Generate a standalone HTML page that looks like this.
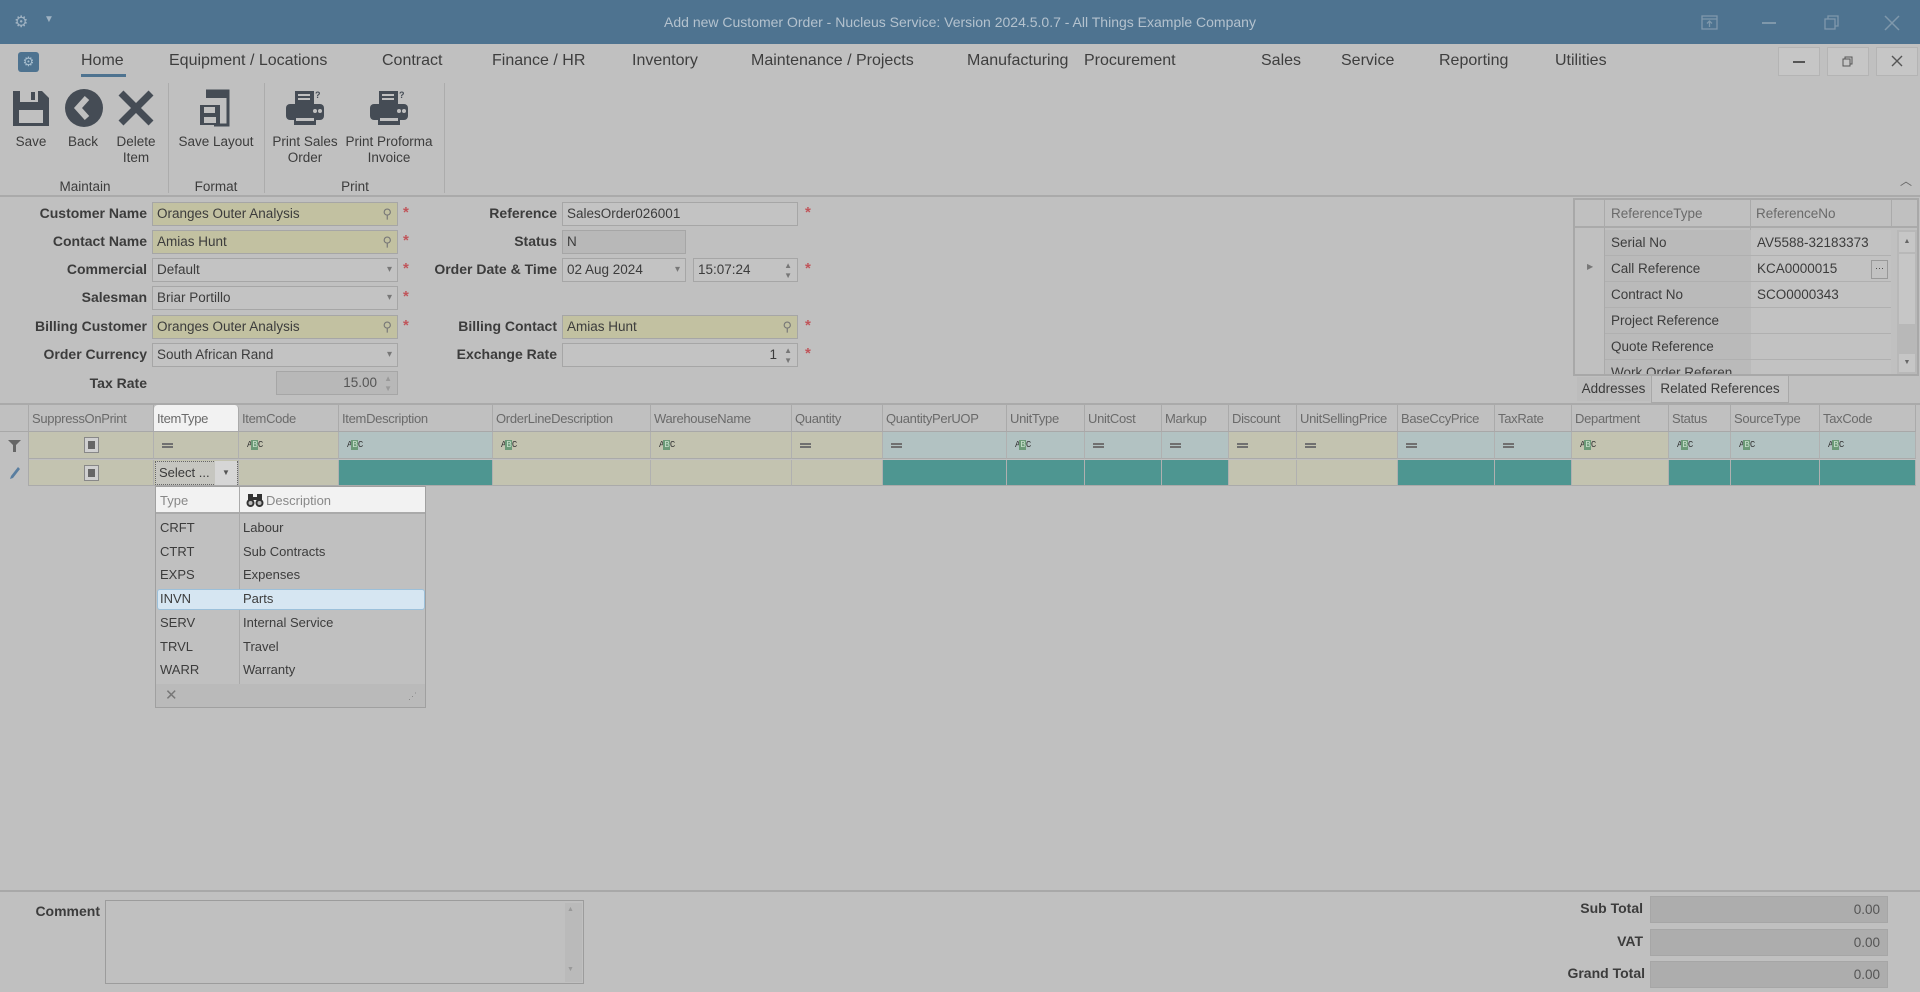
<!DOCTYPE html>
<html><head><meta charset="utf-8"><style>
*{box-sizing:border-box;margin:0;padding:0}
body{width:1920px;height:992px;background:#c0c0c0;font-family:"Liberation Sans",sans-serif;color:#3a3a3a;position:relative;overflow:hidden;font-size:14px}
.a{position:absolute}
.title{left:0;top:0;width:1920px;height:44px;background:#4e7390;color:#b4c2ce;font-size:14px;text-align:center;line-height:44px}
.menu{top:52px;font-size:16px;color:#3e3e3e}
.lbl{font-weight:bold;font-size:14px;text-align:right;color:#3c3c3c}
.f{height:24px;border:1px solid #a6a6a6;background:#c3c3c3;font-size:13.5px;line-height:22px;padding-left:4px;color:#3c3c3c}
.y{background:#c2c1a1}
.dis{background:#b8b8b8}
.ast{color:#c0555a;font-size:15px;font-weight:bold}
.ic{position:absolute;right:5px;top:0;font-size:10px;color:#777}
.rl{font-size:13.5px;text-align:center;color:#3c3c3c;line-height:16px}
.gh{top:405px;height:27px;font-size:13px;color:#6a6a6a;line-height:27px;padding-left:3px;border-right:1px solid #aaa;white-space:nowrap;overflow:hidden;letter-spacing:-0.3px}
.fr{top:432px;height:27px;border-right:1px solid #b0b0b0;border-bottom:1px solid #aaa;padding-left:8px;color:#555}
.er{top:460px;height:26px;border-right:1px solid #b0b0b0;border-bottom:1px solid #aaa}
.t{background:#c3c3b0}.b{background:#b2c2c2}.tl{background:#4e9691}
.eq{position:absolute;left:8px;top:11px;width:11px;height:5px;border-top:2px solid #707070;border-bottom:2px solid #707070}
.abc{position:absolute;left:8px;top:8px;font-size:9px;font-family:"Liberation Mono",monospace;color:#333;line-height:11px;letter-spacing:-1px}
.abc b{background:#6c9a78;color:#c8e0cc;padding:0 1px;font-weight:normal}
.dd{font-size:13px;color:#3c3c3c}
.rr{height:26px;border-bottom:1px solid #b0b0b0;font-size:13.5px;line-height:26px;padding-left:6px;color:#3c3c3c}
</style></head><body>
<div class="a title">Add new Customer Order - Nucleus Service: Version 2024.5.0.7 - All Things Example Company</div>
<div class="a" style="left:14px;top:12px;color:#9fb2c2;font-size:16px">⚙</div>
<div class="a" style="left:44px;top:14px;color:#9fb2c2;font-size:10px">▼</div>
<svg class="a" style="left:1700px;top:14px" width="20" height="18"><rect x="2" y="2" width="15" height="13" fill="none" stroke="#7f98ab" stroke-width="1.3"/><path d="M2 5h15M9.5 13V7M7 9.5l2.5-2.5 2.5 2.5" stroke="#7f98ab" fill="none" stroke-width="1.3"/></svg>
<div class="a" style="left:1762px;top:22px;width:14px;height:1.5px;background:#7f98ab"></div>
<svg class="a" style="left:1823px;top:14px" width="18" height="18"><rect x="2" y="5" width="10" height="10" fill="none" stroke="#7f98ab" stroke-width="1.3"/><path d="M5 5V2h10v10h-3" fill="none" stroke="#7f98ab" stroke-width="1.3"/></svg>
<svg class="a" style="left:1882px;top:13px" width="20" height="20"><path d="M3 3l14 14M17 3L3 17" stroke="#7f98ab" stroke-width="1.5"/></svg>

<div class="a" style="left:18px;top:52px;width:21px;height:20px;background:#4e7390;border-radius:3px;color:#a9c0d0;font-size:13px;text-align:center;line-height:20px">⚙</div>
<div class="a menu" style="left:81px">Home</div>
<div class="a" style="left:81px;top:74px;width:45px;height:3px;background:#4e7390"></div>
<div class="a menu" style="left:169px">Equipment / Locations</div>
<div class="a menu" style="left:382px">Contract</div>
<div class="a menu" style="left:492px">Finance / HR</div>
<div class="a menu" style="left:632px">Inventory</div>
<div class="a menu" style="left:751px">Maintenance / Projects</div>
<div class="a menu" style="left:967px">Manufacturing</div>
<div class="a menu" style="left:1084px">Procurement</div>
<div class="a menu" style="left:1261px">Sales</div>
<div class="a menu" style="left:1341px">Service</div>
<div class="a menu" style="left:1439px">Reporting</div>
<div class="a menu" style="left:1555px">Utilities</div>
<div class="a" style="left:1778px;top:47px;width:42px;height:29px;background:#c6c6c6;border:1px solid #b4b4b4"><div class="a" style="left:14px;top:13px;width:12px;height:1.5px;background:#555"></div></div>
<svg class="a" style="left:1827px;top:47px" width="42" height="29"><rect x="0.5" y="0.5" width="41" height="28" fill="#c6c6c6" stroke="#b4b4b4"/><rect x="16" y="12" width="7" height="7" fill="none" stroke="#555"/><path d="M18 12V10h7v7h-2" fill="none" stroke="#555"/></svg>
<svg class="a" style="left:1876px;top:47px" width="42" height="29"><rect x="0.5" y="0.5" width="41" height="28" fill="#c6c6c6" stroke="#b4b4b4"/><path d="M16 9l10 10M26 9L16 19" stroke="#555" stroke-width="1.4"/></svg>

<!-- ribbon icons -->
<svg class="a" style="left:11px;top:88px" width="40" height="40"><path d="M2 3h29l7 7v28H2z" fill="#454c55"/><rect x="9" y="3" width="18" height="11" fill="#c0c0c0"/><rect x="20" y="4" width="4" height="8" fill="#454c55"/><rect x="8" y="22" width="24" height="13" fill="#c0c0c0"/></svg>
<svg class="a" style="left:64px;top:88px" width="40" height="40"><circle cx="20" cy="20" r="19" fill="#454c55"/><path d="M23 10L14 20l9 10" stroke="#c0c0c0" stroke-width="6" fill="none"/></svg>
<svg class="a" style="left:116px;top:88px" width="40" height="40"><path d="M5 5l30 30M35 5L5 35" stroke="#454c55" stroke-width="7"/></svg>
<svg class="a" style="left:198px;top:88px" width="38" height="40"><path d="M8 3h22v34H16" fill="none" stroke="#454c55" stroke-width="3"/><path d="M8 3h22v7H8z" fill="#454c55"/><rect x="2" y="17" width="20" height="20" fill="#454c55"/><rect x="6" y="19" width="11" height="6" fill="#c0c0c0"/><rect x="6" y="29" width="12" height="6" fill="#c0c0c0"/></svg>
<svg class="a" style="left:284px;top:88px" width="42" height="40"><rect x="11" y="3" width="19" height="14" fill="#454c55"/><path d="M14 7h12M14 11h12" stroke="#c0c0c0" stroke-width="2"/><rect x="2" y="16" width="38" height="16" rx="4" fill="#454c55"/><rect x="10" y="29" width="22" height="8" fill="#454c55"/><rect x="12" y="30" width="18" height="3" fill="#c0c0c0"/><circle cx="31" cy="23" r="2" fill="#c0c0c0"/><circle cx="36" cy="23" r="2" fill="#c0c0c0"/><text x="31" y="10" font-size="9" fill="#454c55" font-family="Liberation Sans" font-weight="bold">?</text></svg>
<svg class="a" style="left:368px;top:88px" width="42" height="40"><rect x="11" y="3" width="19" height="14" fill="#454c55"/><path d="M14 7h12M14 11h12" stroke="#c0c0c0" stroke-width="2"/><rect x="2" y="16" width="38" height="16" rx="4" fill="#454c55"/><rect x="10" y="29" width="22" height="8" fill="#454c55"/><rect x="12" y="30" width="18" height="3" fill="#c0c0c0"/><circle cx="31" cy="23" r="2" fill="#c0c0c0"/><circle cx="36" cy="23" r="2" fill="#c0c0c0"/><text x="31" y="10" font-size="9" fill="#454c55" font-family="Liberation Sans" font-weight="bold">?</text></svg>
<div class="a rl" style="left:11px;top:134px;width:40px">Save</div>
<div class="a rl" style="left:63px;top:134px;width:40px">Back</div>
<div class="a rl" style="left:110px;top:134px;width:52px">Delete<br>Item</div>
<div class="a rl" style="left:172px;top:134px;width:88px">Save Layout</div>
<div class="a rl" style="left:268px;top:134px;width:74px">Print Sales<br>Order</div>
<div class="a rl" style="left:344px;top:134px;width:90px">Print Proforma<br>Invoice</div>
<div class="a rl" style="left:40px;top:179px;width:90px">Maintain</div>
<div class="a rl" style="left:172px;top:179px;width:88px">Format</div>
<div class="a rl" style="left:300px;top:179px;width:110px">Print</div>
<div class="a" style="left:168px;top:83px;width:1px;height:110px;background:#acacac"></div>
<div class="a" style="left:264px;top:83px;width:1px;height:110px;background:#acacac"></div>
<div class="a" style="left:444px;top:83px;width:1px;height:110px;background:#acacac"></div>
<div class="a" style="left:1900px;top:172px;font-size:12px;color:#666">︿</div>
<div class="a" style="left:0;top:195px;width:1920px;height:2px;background:#aaa"></div>

<!-- form -->
<div class="a lbl" style="left:0;top:205px;width:147px">Customer Name</div>
<div class="a f y" style="left:152px;top:202px;width:246px">Oranges Outer Analysis<span class="ic" style="font-size:13px">⚲</span></div>
<div class="a ast" style="left:403px;top:204px">*</div>
<div class="a lbl" style="left:0;top:233px;width:147px">Contact Name</div>
<div class="a f y" style="left:152px;top:230px;width:246px">Amias Hunt<span class="ic" style="font-size:13px">⚲</span></div>
<div class="a ast" style="left:403px;top:232px">*</div>
<div class="a lbl" style="left:0;top:261px;width:147px">Commercial</div>
<div class="a f" style="left:152px;top:258px;width:246px">Default<span class="ic">▾</span></div>
<div class="a ast" style="left:403px;top:260px">*</div>
<div class="a lbl" style="left:0;top:289px;width:147px">Salesman</div>
<div class="a f" style="left:152px;top:286px;width:246px">Briar Portillo<span class="ic">▾</span></div>
<div class="a ast" style="left:403px;top:288px">*</div>
<div class="a lbl" style="left:0;top:318px;width:147px">Billing Customer</div>
<div class="a f y" style="left:152px;top:315px;width:246px">Oranges Outer Analysis<span class="ic" style="font-size:13px">⚲</span></div>
<div class="a ast" style="left:403px;top:317px">*</div>
<div class="a lbl" style="left:0;top:346px;width:147px">Order Currency</div>
<div class="a f" style="left:152px;top:343px;width:246px">South African Rand<span class="ic">▾</span></div>
<div class="a lbl" style="left:0;top:375px;width:147px">Tax Rate</div>
<div class="a f dis" style="left:276px;top:371px;width:122px;text-align:right;padding-right:20px;color:#555">15.00<span class="ic" style="font-size:8px;color:#999;line-height:10px;top:2px">▲<br>▼</span></div>

<div class="a lbl" style="left:400px;top:205px;width:157px">Reference</div>
<div class="a f" style="left:562px;top:202px;width:236px">SalesOrder026001</div>
<div class="a ast" style="left:805px;top:204px">*</div>
<div class="a lbl" style="left:400px;top:233px;width:157px">Status</div>
<div class="a f dis" style="left:562px;top:230px;width:124px">N</div>
<div class="a lbl" style="left:400px;top:261px;width:157px">Order Date &amp; Time</div>
<div class="a f" style="left:562px;top:258px;width:124px">02 Aug 2024<span class="ic">▾</span></div>
<div class="a f" style="left:693px;top:258px;width:105px">15:07:24<span class="ic" style="font-size:8px;line-height:10px;top:2px">▲<br>▼</span></div>
<div class="a ast" style="left:805px;top:260px">*</div>
<div class="a lbl" style="left:400px;top:318px;width:157px">Billing Contact</div>
<div class="a f y" style="left:562px;top:315px;width:236px">Amias Hunt<span class="ic" style="font-size:13px">⚲</span></div>
<div class="a ast" style="left:805px;top:317px">*</div>
<div class="a lbl" style="left:400px;top:346px;width:157px">Exchange Rate</div>
<div class="a f" style="left:562px;top:343px;width:236px;text-align:right;padding-right:20px">1<span class="ic" style="font-size:8px;line-height:10px;top:2px">▲<br>▼</span></div>
<div class="a ast" style="left:805px;top:345px">*</div>

<!-- references panel -->
<div class="a" style="left:1573px;top:198px;width:346px;height:178px;border:2px solid #a8a8a8;background:#c0c0c0;overflow:hidden">
 <div class="a" style="left:0;top:0;width:342px;height:28px;border-bottom:2px solid #aaa"></div>
 <div class="a" style="left:29px;top:0;width:1px;height:176px;background:#aaa"></div>
 <div class="a" style="left:36px;top:6px;font-size:13.5px;color:#6a6a6a">ReferenceType</div>
 <div class="a" style="left:175px;top:0;width:1px;height:176px;background:#aaa"></div>
 <div class="a" style="left:181px;top:6px;font-size:13.5px;color:#6a6a6a">ReferenceNo</div>
 <div class="a" style="left:316px;top:0;width:1px;height:28px;background:#aaa"></div>
 <div class="a" style="left:30px;top:30px;width:286px">
  <div class="rr" style="background:#bababa">Serial No</div>
  <div class="rr" style="background:#bababa">Call Reference</div>
  <div class="rr" style="background:#bababa">Contract No</div>
  <div class="rr" style="background:#bababa">Project Reference</div>
  <div class="rr" style="background:#bababa">Quote Reference</div>
  <div class="rr" style="background:#bababa">Work Order Referen</div>
 </div>
 <div class="a" style="left:176px;top:30px;width:140px">
  <div class="rr" style="background:#c2c2c2">AV5588-32183373</div>
  <div class="rr" style="background:#c2c2c2">KCA0000015</div>
  <div class="rr" style="background:#c2c2c2">SCO0000343</div>
  <div class="rr" style="background:#c2c2c2"></div>
  <div class="rr" style="background:#c2c2c2"></div>
  <div class="rr" style="background:#c2c2c2"></div>
 </div>
 <div class="a" style="left:296px;top:60px;width:17px;height:19px;border:1px solid #999;font-size:9px;text-align:center;line-height:14px">···</div>
 <div class="a" style="left:12px;top:62px;font-size:8px;color:#777">▶</div>
 <div class="a" style="left:322px;top:30px;width:20px;height:146px;background:#b8b8b8"></div>
 <div class="a" style="left:324px;top:32px;width:16px;height:20px;background:#c6c6c6;font-size:7px;text-align:center;line-height:20px;color:#666">▲</div>
 <div class="a" style="left:324px;top:54px;width:16px;height:70px;background:#c6c6c6"></div>
 <div class="a" style="left:324px;top:154px;width:16px;height:18px;background:#c6c6c6;font-size:7px;text-align:center;line-height:18px;color:#666">▼</div>
</div>
<div class="a" style="left:1577px;top:377px;width:73px;height:24px;background:#bcbcbc;font-size:13.5px;line-height:24px;text-align:center">Addresses</div>
<div class="a" style="left:1651px;top:376px;width:138px;height:27px;background:#c4c4c4;border:1px solid #a8a8a8;border-top:none;font-size:13.5px;line-height:26px;text-align:center">Related References</div>

<!-- grid -->
<div class="a" style="left:0;top:403px;width:1920px;height:2px;background:#aaa"></div>
<div class="a gh" style="left:0;width:29px"></div>
<div class="a gh" style="left:29px;width:125px">SuppressOnPrint</div>
<div class="a gh" style="left:154px;width:85px;background:#f2f2f2;border-radius:4px 4px 0 0">ItemType</div>
<div class="a gh" style="left:239px;width:100px">ItemCode</div>
<div class="a gh" style="left:339px;width:154px">ItemDescription</div>
<div class="a gh" style="left:493px;width:158px">OrderLineDescription</div>
<div class="a gh" style="left:651px;width:141px">WarehouseName</div>
<div class="a gh" style="left:792px;width:91px">Quantity</div>
<div class="a gh" style="left:883px;width:124px">QuantityPerUOP</div>
<div class="a gh" style="left:1007px;width:78px">UnitType</div>
<div class="a gh" style="left:1085px;width:77px">UnitCost</div>
<div class="a gh" style="left:1162px;width:67px">Markup</div>
<div class="a gh" style="left:1229px;width:68px">Discount</div>
<div class="a gh" style="left:1297px;width:101px">UnitSellingPrice</div>
<div class="a gh" style="left:1398px;width:97px">BaseCcyPrice</div>
<div class="a gh" style="left:1495px;width:77px">TaxRate</div>
<div class="a gh" style="left:1572px;width:97px">Department</div>
<div class="a gh" style="left:1669px;width:62px">Status</div>
<div class="a gh" style="left:1731px;width:89px">SourceType</div>
<div class="a gh" style="left:1820px;width:96px">TaxCode</div>
<div class="a" style="left:0;top:431px;width:1916px;height:1px;background:#a8a8a8"></div>

<div class="a" style="left:0;top:432px;width:29px;height:54px;background:#c0c0c0;border-right:1px solid #aaa"></div>
<svg class="a" style="left:8px;top:440px" width="13" height="12"><path d="M0 0h13L8 5v7H5V5z" fill="#666"/></svg>
<svg class="a" style="left:9px;top:466px" width="12" height="13"><path d="M9 1l2 2-7 9-3 1 1-3z" fill="#5a7ea0"/></svg>
<!-- filter row -->
<div class="a fr t" style="left:29px;width:125px"></div>
<div class="a fr t" style="left:154px;width:85px"><i class="eq"></i></div>
<div class="a fr t" style="left:239px;width:100px"><span class="abc">A<b>B</b>C</span></div>
<div class="a fr b" style="left:339px;width:154px"><span class="abc">A<b>B</b>C</span></div>
<div class="a fr t" style="left:493px;width:158px"><span class="abc">A<b>B</b>C</span></div>
<div class="a fr t" style="left:651px;width:141px"><span class="abc">A<b>B</b>C</span></div>
<div class="a fr t" style="left:792px;width:91px"><i class="eq"></i></div>
<div class="a fr b" style="left:883px;width:124px"><i class="eq"></i></div>
<div class="a fr b" style="left:1007px;width:78px"><span class="abc">A<b>B</b>C</span></div>
<div class="a fr b" style="left:1085px;width:77px"><i class="eq"></i></div>
<div class="a fr b" style="left:1162px;width:67px"><i class="eq"></i></div>
<div class="a fr t" style="left:1229px;width:68px"><i class="eq"></i></div>
<div class="a fr t" style="left:1297px;width:101px"><i class="eq"></i></div>
<div class="a fr b" style="left:1398px;width:97px"><i class="eq"></i></div>
<div class="a fr b" style="left:1495px;width:77px"><i class="eq"></i></div>
<div class="a fr t" style="left:1572px;width:97px"><span class="abc">A<b>B</b>C</span></div>
<div class="a fr b" style="left:1669px;width:62px"><span class="abc">A<b>B</b>C</span></div>
<div class="a fr b" style="left:1731px;width:89px"><span class="abc">A<b>B</b>C</span></div>
<div class="a fr b" style="left:1820px;width:96px"><span class="abc">A<b>B</b>C</span></div>
<!-- edit row -->
<div class="a er t" style="left:29px;width:125px"></div>
<div class="a er t" style="left:154px;width:85px"></div>
<div class="a er t" style="left:239px;width:100px"></div>
<div class="a er tl" style="left:339px;width:154px"></div>
<div class="a er t" style="left:493px;width:158px"></div>
<div class="a er t" style="left:651px;width:141px"></div>
<div class="a er t" style="left:792px;width:91px"></div>
<div class="a er tl" style="left:883px;width:124px"></div>
<div class="a er tl" style="left:1007px;width:78px"></div>
<div class="a er tl" style="left:1085px;width:77px"></div>
<div class="a er tl" style="left:1162px;width:67px"></div>
<div class="a er t" style="left:1229px;width:68px"></div>
<div class="a er t" style="left:1297px;width:101px"></div>
<div class="a er tl" style="left:1398px;width:97px"></div>
<div class="a er tl" style="left:1495px;width:77px"></div>
<div class="a er t" style="left:1572px;width:97px"></div>
<div class="a er tl" style="left:1669px;width:62px"></div>
<div class="a er tl" style="left:1731px;width:89px"></div>
<div class="a er tl" style="left:1820px;width:96px"></div>
<div class="a" style="left:84px;top:437px;width:15px;height:16px;border:1px solid #888;background:#d0d0d0"><div class="a" style="left:3px;top:3px;width:7px;height:8px;background:#666"></div></div>
<div class="a" style="left:84px;top:465px;width:15px;height:16px;border:1px solid #888;background:#d0d0d0"><div class="a" style="left:3px;top:3px;width:7px;height:8px;background:#666"></div></div>
<div class="a" style="left:155px;top:461px;width:83px;height:24px;border:1px dotted #666;background:#c6c6c0;font-size:13px;line-height:22px;padding-left:3px">Select ...</div>
<div class="a" style="left:215px;top:461px;width:22px;height:24px;background:#d6d6d6;font-size:8px;text-align:center;line-height:24px;color:#555">▼</div>

<!-- dropdown -->
<div class="a" style="left:155px;top:486px;width:271px;height:222px;border:1px solid #a0a0a0;background:#c0c0c0">
 <div class="a" style="left:0;top:0;width:269px;height:27px;background:#f2f2f2;border-bottom:2px solid #aaa"></div>
 <div class="a dd" style="left:4px;top:6px;color:#888">Type</div>
 <div class="a" style="left:83px;top:0;width:1px;height:197px;background:#aaa"></div>
 <svg class="a" style="left:90px;top:6px" width="18" height="15"><circle cx="4.5" cy="10" r="4" fill="#333"/><circle cx="13.5" cy="10" r="4" fill="#333"/><rect x="2" y="1" width="5" height="8" fill="#333"/><rect x="11" y="1" width="5" height="8" fill="#333"/><rect x="6" y="4" width="6" height="3" fill="#333"/><circle cx="4.5" cy="10" r="2" fill="#bbb"/><circle cx="13.5" cy="10" r="2" fill="#bbb"/></svg>
 <div class="a dd" style="left:110px;top:6px;color:#888">Description</div>
 <div class="a" style="left:1px;top:102px;width:268px;height:21px;background:#d6e6f2;border:1px solid #9cc0da;border-radius:3px"></div>
 <div class="a dd" style="left:4px;top:29px;line-height:23.7px">CRFT<br>CTRT<br>EXPS<br>INVN<br>SERV<br>TRVL<br>WARR</div>
 <div class="a dd" style="left:87px;top:29px;line-height:23.7px">Labour<br>Sub Contracts<br>Expenses<br>Parts<br>Internal Service<br>Travel<br>Warranty</div>
 <div class="a" style="left:0;top:197px;width:269px;height:23px;background:#bababa"></div>
 <div class="a" style="left:9px;top:199px;font-size:15px;color:#777">✕</div>
 <div class="a" style="left:252px;top:204px;font-size:9px;color:#888">⋰</div>
</div>

<!-- bottom -->
<div class="a" style="left:0;top:890px;width:1920px;height:2px;background:#a8a8a8"></div>
<div class="a lbl" style="left:0;top:903px;width:100px">Comment</div>
<div class="a" style="left:105px;top:900px;width:479px;height:84px;border:1px solid #9c9c9c;background:#c0c0c0"></div>
<div class="a" style="left:565px;top:903px;width:17px;height:79px;background:#bababa"></div>
<div class="a" style="left:567px;top:906px;font-size:7px;color:#999">▲</div>
<div class="a" style="left:567px;top:966px;font-size:7px;color:#999">▼</div>
<div class="a lbl" style="left:1500px;top:900px;width:143px">Sub Total</div>
<div class="a f dis" style="left:1650px;top:896px;width:238px;height:27px;text-align:right;padding-right:7px;line-height:25px;background:#adadad;color:#555">0.00</div>
<div class="a lbl" style="left:1500px;top:933px;width:143px">VAT</div>
<div class="a f dis" style="left:1650px;top:929px;width:238px;height:27px;text-align:right;padding-right:7px;line-height:25px;background:#adadad;color:#555">0.00</div>
<div class="a lbl" style="left:1500px;top:965px;width:145px">Grand Total</div>
<div class="a f dis" style="left:1650px;top:961px;width:238px;height:27px;text-align:right;padding-right:7px;line-height:25px;background:#adadad;color:#555">0.00</div>
</body></html>
